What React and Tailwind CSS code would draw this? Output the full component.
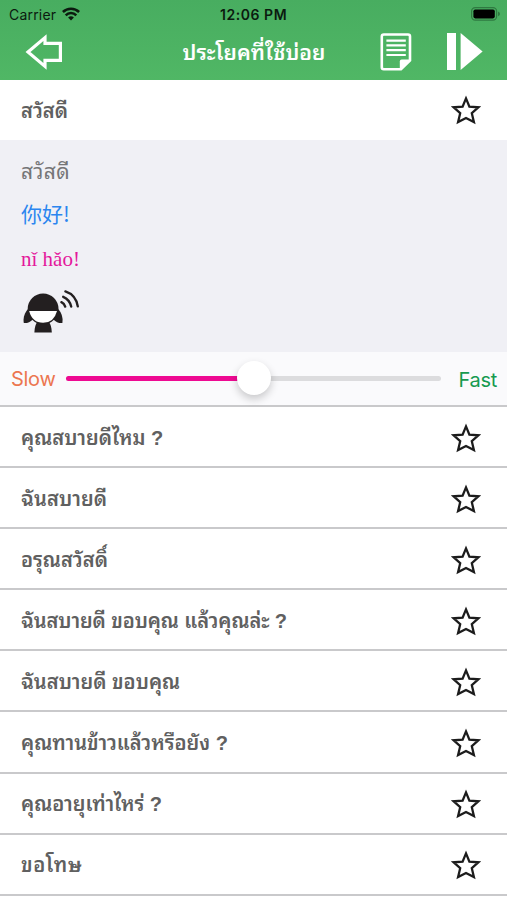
import { useState } from "react";

const phrases = [
  { id: 2, text: "คุณสบายดีไหม ?", spacing: "tracking-normal" },
  { id: 3, text: "ฉันสบายดี", spacing: "tracking-[0.1px]" },
  { id: 4, text: "อรุณสวัสดิ์", spacing: "tracking-normal" },
  { id: 5, text: "ฉันสบายดี ขอบคุณ แล้วคุณล่ะ ?", spacing: "tracking-[-0.1px]" },
  { id: 6, text: "ฉันสบายดี ขอบคุณ", spacing: "tracking-normal" },
  { id: 7, text: "คุณทานข้าวแล้วหรือยัง ?", spacing: "tracking-normal" },
  { id: 8, text: "คุณอายุเท่าไหร่ ?", spacing: "tracking-normal" },
  { id: 9, text: "ขอโทษ", spacing: "tracking-[0.6px]" },
];

function StarIcon() {
  return (
    <svg width="30" height="30" viewBox="0 0 30 30" fill="none" stroke="#1c1c1c" strokeWidth="2.3">
      <path d="M15 3.4 L18.4 11.6 L27.3 12.3 L20.8 18.2 L22.9 27 L15 23 L7.1 27 L9.2 18.2 L2.7 12.3 L11.6 11.6 Z" />
    </svg>
  );
}

function WifiIcon() {
  return (
    <svg width="18" height="14" viewBox="0 0 18 14" fill="none" stroke="#0b1a0f" strokeWidth="2.5">
      <path d="M0.9 5 A11.5 11.5 0 0 1 17.1 5" />
      <path d="M3.7 8.3 A7.4 7.4 0 0 1 14.3 8.3" />
      <path d="M9 13.6 L6.1 10.6 A4.1 4.1 0 0 1 11.9 10.6 Z" fill="#0b1a0f" stroke="none" />
    </svg>
  );
}

function BatteryIcon() {
  return (
    <svg width="30" height="14" viewBox="0 0 30 14">
      <rect x="0.6" y="0.6" width="25" height="12.6" rx="3.6" fill="none" stroke="#2f7a41" strokeWidth="1.2" />
      <rect x="2.4" y="2.4" width="21.4" height="9" rx="1.8" fill="#000" />
      <path d="M27 4.6 Q29 5.4 29 7 Q29 8.4 27 9.2 Z" fill="#2f7a41" />
    </svg>
  );
}

function BackIcon() {
  return (
    <svg width="38" height="38" viewBox="0 0 38 38" fill="none" stroke="#fff" strokeWidth="3.2">
      <path d="M3 19 L20 4.6 V10.3 H35.4 V27.4 H20 V33.4 Z" />
    </svg>
  );
}

function NoteIcon() {
  return (
    <svg width="32" height="38" viewBox="0 0 32 38" fill="none" stroke="#fff">
      <path d="M3.8 1.5 H28 Q30 1.5 30 3.5 V27.4 L21 36.2 H3.8 Q1.8 36.2 1.8 34.2 V3.5 Q1.8 1.5 3.8 1.5 Z" strokeWidth="2.6" />
      <path d="M19.8 37 V28.4 Q19.8 26.6 21.6 26.6 H30.6 Z" fill="#fff" stroke="none" />
      <path d="M6.4 7.6 H25.8 M6.4 12.4 H25.8 M6.4 17.2 H25.8 M6.4 22 H25.8" strokeWidth="2.2" />
    </svg>
  );
}

function PlayIcon() {
  return (
    <svg width="36" height="38" viewBox="0 0 36 38" fill="#fff">
      <rect x="0" y="0" width="9" height="37" />
      <path d="M13.6 0 L35.6 18.6 L13.6 37 Z" />
    </svg>
  );
}

function SpeakerGirl() {
  return (
    <svg width="58" height="46" viewBox="0 0 58 46" fill="#231f20">
      <path d="M5.4 19.4 Q-0.6 26 0.8 34 Q6 34.4 9.8 30.4 L7 20 Z" />
      <path d="M34.8 19.4 Q40.8 26 39.4 34 Q34.2 34.4 30.4 30.4 L33.2 20 Z" />
      <path d="M14.2 33 H26 Q28.6 36.4 28.8 43.6 H11.4 Q11.6 36.4 14.2 33 Z" />
      <circle cx="20.1" cy="19.8" r="15.4" />
      <path d="M6.2 22 H34 Q31 33.8 20.1 33.8 Q9.2 33.8 6.2 22 Z" fill="#fff" />
      <g fill="none" stroke="#231f20" strokeWidth="2.4" strokeLinecap="round">
        <path d="M38.4 13.2 Q41.4 14.6 42.2 17.6" />
        <path d="M40.2 7.8 Q46.6 10.4 48.2 17.6" />
        <path d="M42.4 2.4 Q52.8 5.8 54.8 17.4" />
      </g>
    </svg>
  );
}

function PhraseRow({ text, spacing }) {
  return (
    <div className="flex h-[61.1px] shrink-0 items-center justify-between border-b-2 border-[#c9c9cb] pl-[21px] pr-[26px] pt-[2px]">
      <span className={`whitespace-nowrap text-[20px] font-semibold text-[#606060] ${spacing}`}>{text}</span>
      <StarIcon />
    </div>
  );
}

export default function App() {
  const [speed] = useState(50);

  return (
    <div className="flex h-[900px] w-[507px] flex-col overflow-hidden bg-white font-['Liberation_Sans','Thonburi','Noto_Sans_Thai_Looped','Loma','Noto_Sans_Thai',sans-serif]">
      <header className="h-[79.5px] shrink-0 bg-linear-to-b from-[#48ad60] to-[#50b765] text-white">
        <div className="flex h-7 items-center pl-[9px] pr-[6px] font-['Inter',sans-serif] text-[14px] text-[#0b1a0f]">
          <div className="flex flex-1 items-center gap-[6px]">
            <span className="tracking-[0.2px]">Carrier</span>
            <WifiIcon />
          </div>
          <span className="-ml-[3px] font-semibold tracking-[0.55px]">12:06 PM</span>
          <div className="flex flex-1 justify-end">
            <BatteryIcon />
          </div>
        </div>
        <div className="flex h-12 items-center pl-[25px] pr-[24px]">
          <div className="flex flex-1">
            <BackIcon />
          </div>
          <h1 className="whitespace-nowrap pt-px text-[21px] font-semibold tracking-[0.1px]">ประโยคที่ใช้บ่อย</h1>
          <div className="flex flex-1 items-center justify-end gap-[35px]">
            <NoteIcon />
            <PlayIcon />
          </div>
        </div>
      </header>

      <div className="flex h-[60.5px] shrink-0 items-center justify-between pl-[21px] pr-[26px] pt-px">
        <span className="pt-px text-[20px] font-semibold text-[#606060]">สวัสดี</span>
        <StarIcon />
      </div>

      <section className="flex h-[212px] shrink-0 flex-col bg-[#f0f0f5] pl-[21px] pt-[9px]">
        <p className="h-11 text-[21px] leading-[45px] tracking-[0.3px] text-[#757577]">สวัสดี</p>
        <p className="h-11 font-['Noto_Sans_CJK_SC',sans-serif] text-[21px] leading-[41px] text-[#2b86ef]">你好!</p>
        <p className="h-11 font-['Liberation_Serif',serif] text-[21px] leading-[44px] text-[#e4189c]">nǐ hǎo!</p>
        <div className="mt-[8px] ml-[2px]">
          <SpeakerGirl />
        </div>
      </section>

      <div className="flex h-[55px] shrink-0 items-center border-b-2 border-[#c9c9cb] bg-[#fafafc] pl-[11px] pr-[10px] font-['Inter',sans-serif] text-[20px] tracking-[-0.3px]">
        <span className="w-[55px] text-[#ec7650]">Slow</span>
        <div className="relative h-[5px] w-[375px] rounded-full bg-[#dcdcde]">
          <div className="h-full rounded-full bg-[#ee0a92]" style={{ width: `${speed}%` }} />
          <div className="absolute -top-[15px] left-[171px] size-[34px] rounded-full bg-white shadow-[0_4px_9px_rgba(0,0,0,0.2)]" />
        </div>
        <span className="flex-1 pt-[2px] text-right text-[#169a50]">Fast</span>
      </div>

      {phrases.map((p) => (
        <PhraseRow key={p.id} text={p.text} spacing={p.spacing} />
      ))}
    </div>
  );
}
